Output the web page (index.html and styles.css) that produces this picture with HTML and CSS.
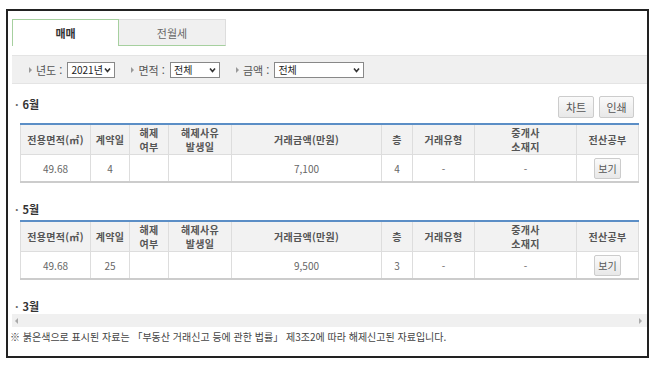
FILE: index.html
```html
<!DOCTYPE html>
<html lang="ko">
<head>
    <meta charset="UTF-8">
    <meta name="viewport" content="width=device-width, initial-scale=1.0">
    <title>실거래가 조회</title>
    <link rel="stylesheet" href="styles.css">
</head>
<body>
    <div class="frame">
        <div class="tabs">
            <div class="tab active">매매</div>
            <div class="tab">전월세</div>
        </div>

        <div class="filters">
            <span class="filter"><i class="arrow"></i>년도 : <span class="select w-year">2021년<svg width="7" height="6" viewBox="0 0 7 6"><path d="M1 1.5 L3.5 4.5 L6 1.5" fill="none" stroke="#333" stroke-width="1.6"/></svg></span></span>
            <span class="filter"><i class="arrow"></i>면적 : <span class="select w-area">전체<svg width="7" height="6" viewBox="0 0 7 6"><path d="M1 1.5 L3.5 4.5 L6 1.5" fill="none" stroke="#333" stroke-width="1.6"/></svg></span></span>
            <span class="filter"><i class="arrow"></i>금액 : <span class="select w-price">전체<svg width="7" height="6" viewBox="0 0 7 6"><path d="M1 1.5 L3.5 4.5 L6 1.5" fill="none" stroke="#333" stroke-width="1.6"/></svg></span></span>
        </div>

        <div class="content">
            <div class="month">
                <div class="month-head">
                    <h3>6월</h3>
                    <div class="actions">
                        <button class="btn">차트</button>
                        <button class="btn">인쇄</button>
                    </div>
                </div>
                <table class="deals">
                    <colgroup>
                        <col style="width:70px"><col style="width:39px"><col style="width:39px"><col style="width:63px"><col style="width:150px"><col style="width:31px"><col style="width:62px"><col style="width:102px"><col style="width:62px">
                    </colgroup>
                    <thead>
                        <tr>
                            <th>전용면적(㎡)</th>
                            <th>계약일</th>
                            <th>해제<br>여부</th>
                            <th>해제사유<br>발생일</th>
                            <th>거래금액(만원)</th>
                            <th>층</th>
                            <th>거래유형</th>
                            <th>중개사<br>소재지</th>
                            <th>전산공부</th>
                        </tr>
                    </thead>
                    <tbody>
                        <tr>
                            <td>49.68</td>
                            <td>4</td>
                            <td></td>
                            <td></td>
                            <td>7,100</td>
                            <td>4</td>
                            <td>-</td>
                            <td>-</td>
                            <td><button class="btn small">보기</button></td>
                        </tr>
                    </tbody>
                </table>
            </div>

            <div class="month">
                <div class="month-head">
                    <h3>5월</h3>
                </div>
                <table class="deals">
                    <colgroup>
                        <col style="width:70px"><col style="width:39px"><col style="width:39px"><col style="width:63px"><col style="width:150px"><col style="width:31px"><col style="width:62px"><col style="width:102px"><col style="width:62px">
                    </colgroup>
                    <thead>
                        <tr>
                            <th>전용면적(㎡)</th>
                            <th>계약일</th>
                            <th>해제<br>여부</th>
                            <th>해제사유<br>발생일</th>
                            <th>거래금액(만원)</th>
                            <th>층</th>
                            <th>거래유형</th>
                            <th>중개사<br>소재지</th>
                            <th>전산공부</th>
                        </tr>
                    </thead>
                    <tbody>
                        <tr>
                            <td>49.68</td>
                            <td>25</td>
                            <td></td>
                            <td></td>
                            <td>9,500</td>
                            <td>3</td>
                            <td>-</td>
                            <td>-</td>
                            <td><button class="btn small">보기</button></td>
                        </tr>
                    </tbody>
                </table>
            </div>

            <div class="month">
                <div class="month-head">
                    <h3>3월</h3>
                </div>
            </div>
        </div>

        <div class="hscroll">
            <i class="sb-left"></i>
            <i class="sb-right"></i>
        </div>

        <p class="note">※ 붉은색으로 표시된 자료는 「부동산 거래신고 등에 관한 법률」 제3조2에 따라 해제신고된 자료입니다.</p>
    </div>
</body>
</html>
```

FILE: styles.css
```css
body { margin: 0; background: #fff; font-family: "Noto Sans CJK KR", "Noto Sans", sans-serif; color: #555; }

.frame { box-sizing: border-box; width: 643px; height: 349px; margin: 9px 0 0 6px; padding: 8px 0 0 4px; border: 2px solid #222; }

/* tabs */
.tabs { display: flex; height: 27px; }
.tab { box-sizing: border-box; width: 107px; height: 27px; display: flex; align-items: center; justify-content: center; font-size: 11px; color: #666; background: #f0f0f0; border-top: 1px solid #ddd; border-right: 1px solid #ddd; border-bottom: 1px solid #a6d09f; }
.tab.active { background: #fff; color: #333; font-weight: bold; border: 1px solid #a6d09f; border-bottom: none; }

/* filter bar */
.filters { box-sizing: border-box; display: flex; align-items: center; height: 29px; margin-top: 9px; padding-left: 17px; background: #f0f0f0; border-top: 1px solid #e4e4e4; border-bottom: 1px solid #e4e4e4; font-size: 11px; color: #555; }
.filter { display: flex; align-items: center; margin-right: 16px; white-space: pre; }
.arrow { width: 0; height: 0; margin-right: 4px; border-left: 3px solid #999; border-top: 3px solid transparent; border-bottom: 3px solid transparent; }
.select { box-sizing: border-box; display: flex; align-items: center; justify-content: space-between; height: 16px; margin-left: 2px; padding: 0 3px 0 3px; background: #fff; border: 1px solid #888; font-size: 10px; color: #222; }
.w-year { width: 48px; }
.w-area { width: 50px; }
.w-price { width: 90px; }

/* month sections */
.content { height: 230px; padding: 12px 13px 0 3px; overflow: hidden; box-sizing: border-box; }
.month { margin-bottom: 18px; }
.month-head { display: flex; justify-content: space-between; align-items: flex-start; margin-bottom: 3px; }
.month-head h3 { margin: 0; font-size: 11px; line-height: 16px; font-weight: bold; color: #333; }
.month-head h3::before { content: "·"; margin-right: 4px; color: #666; }
.actions { display: flex; gap: 5px; margin-bottom: 2px; }

.btn { box-sizing: border-box; height: 22px; width: 36px; padding: 0; font-family: inherit; font-size: 11px; color: #555; background: linear-gradient(#fafafa, #e8e8e8); border: 1px solid #ccc; border-radius: 2px; }
.actions .btn + .btn { width: 35px; }
.btn.small { height: 21px; width: 27px; font-size: 10px; }

table.deals { width: 618px; margin-left: 5px; border-collapse: collapse; table-layout: fixed; border-top: 2px solid #5b8ec6; border-bottom: 2px solid #ccc; }
.deals th, .deals td { border: 1px solid #ddd; text-align: center; padding: 0; }
.deals th { height: 29px; background: #f2f2f2; font-size: 10px; line-height: 14px; font-weight: bold; color: #555; letter-spacing: 0.3px; }
.deals td { height: 26px; font-size: 10px; color: #666; }

/* fake horizontal scrollbar */
.hscroll { display: flex; justify-content: space-between; align-items: center; height: 13px; padding: 0 5px 0 3px; background: #f0f0f0; }
.sb-left { width: 0; height: 0; border-right: 3px solid #aaa; border-top: 3px solid transparent; border-bottom: 3px solid transparent; }
.sb-right { width: 0; height: 0; border-left: 3px solid #aaa; border-top: 3px solid transparent; border-bottom: 3px solid transparent; }

.note { margin: 3px 0 0 -2px; font-size: 10px; line-height: 14px; color: #444; white-space: nowrap; }
```
